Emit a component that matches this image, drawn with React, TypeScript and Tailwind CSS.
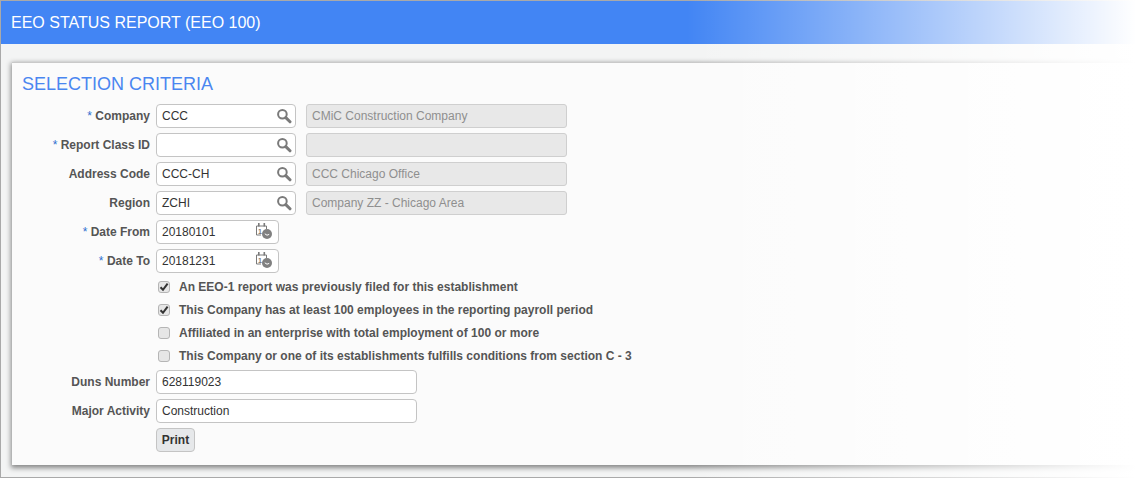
import React from "react";

const Lens = () => (
  <svg width="16" height="16" viewBox="0 0 16 16" fill="none" className="absolute right-[3px] top-[3px]">
    <circle cx="6.4" cy="6.2" r="4.3" stroke="#7a7a7a" strokeWidth="2" fill="#fff" />
    <path d="M9.8 9.6 L14 13.8" stroke="#7a7a7a" strokeWidth="3" strokeLinecap="round" />
  </svg>
);

const Cal = () => (
  <svg width="18" height="18" viewBox="0 0 18 18" fill="none" className="absolute right-[5px] top-[2px]">
    <path d="M1.5 3 H11.5 V6 M1.5 3 V12 H6" stroke="#7a7a7a" strokeWidth="1" />
    <rect x="3" y="0" width="1.6" height="3.5" fill="#7a7a7a" />
    <rect x="8.5" y="0" width="1.6" height="3.5" fill="#7a7a7a" />
    <text x="3" y="10.5" fontSize="7" fontWeight="700" fill="#777" fontFamily="Liberation Sans">1</text>
    <circle cx="12" cy="11" r="5" fill="#808080" />
    <path d="M9.8 10.8 L12 12.2 L14.2 11.4" stroke="#fff" strokeWidth="1" />
  </svg>
);

const Row = ({ label, req, children }: { label: string; req?: boolean; children?: React.ReactNode }) => (
  <div className="flex items-center h-[24px] mb-[5px]">
    <label className="w-[128px] text-right font-bold text-[#555] whitespace-nowrap">
      {req && <span className="text-[#2f6fd0] font-normal">* </span>}
      {label}
    </label>
    <div className="ml-[6px] flex items-center">{children}</div>
  </div>
);

const Input = ({ value, w, icon }: { value: string; w: string; icon?: React.ReactNode }) => (
  <div className={`relative h-[24px] ${w} bg-white border border-[#c4c4c4] rounded-[4px] pl-[5px] flex items-center text-[#333]`}>
    {value}
    {icon}
  </div>
);

const Lookup = ({ value, desc }: { value: string; desc: string }) => (
  <>
    <Input value={value} w="w-[140px]" icon={<Lens />} />
    <div className="ml-[10px] h-[24px] w-[261px] bg-[#e8e8e8] border border-[#cfcfcf] rounded-[3px] pl-[5px] flex items-center text-[#8f8f8f]">
      {desc}
    </div>
  </>
);

const Check = ({ label, on }: { label: string; on?: boolean }) => (
  <div className="flex items-center h-[23px] pl-[136px]">
    <div className="w-[12px] h-[12px] bg-[#e6e6e6] border border-[#b5b5b5] rounded-[3px] flex items-center justify-center">
      {on && (
        <svg width="10" height="10" viewBox="0 0 10 10" fill="none">
          <path d="M1.5 5.2 L4 7.8 L8.6 1.6" stroke="#333" strokeWidth="2" />
        </svg>
      )}
    </div>
    <span className="ml-[9px] font-bold text-[#555] whitespace-nowrap">{label}</span>
  </div>
);

export default function App() {
  return (
    <div className="relative h-[478px] w-[1145px] overflow-hidden">
      <div className="h-full border-t border-l border-b border-[#a9a9a9] bg-[#f3f4f4] text-[12px] font-['Liberation_Sans',Arial,sans-serif]">
        <div className="h-[43px] bg-[#4285f4] flex items-center pl-[10px] text-white text-[16px]">
          EEO STATUS REPORT (EEO 100)
        </div>
        <div className="mt-[18px] ml-[11px] h-[403px] bg-[#fbfbfb] border-t border-[#c9c9c9] pl-[10px] pt-[11px] shadow-[0_2px_5px_1px_rgba(0,0,0,0.45)]">
          <div className="text-[18px] leading-[21px] text-[#4a86f0] mb-[9px]">SELECTION CRITERIA</div>
          <Row label="Company" req><Lookup value="CCC" desc="CMiC Construction Company" /></Row>
          <Row label="Report Class ID" req><Lookup value="" desc="" /></Row>
          <Row label="Address Code"><Lookup value="CCC-CH" desc="CCC Chicago Office" /></Row>
          <Row label="Region"><Lookup value="ZCHI" desc="Company ZZ - Chicago Area" /></Row>
          <Row label="Date From" req><Input value="20180101" w="w-[123px]" icon={<Cal />} /></Row>
          <Row label="Date To" req><Input value="20181231" w="w-[123px]" icon={<Cal />} /></Row>
          <div className="-mt-[3px] mb-[3px]">
            <Check on label="An EEO-1 report was previously filed for this establishment" />
            <Check on label="This Company has at least 100 employees in the reporting payroll period" />
            <Check label="Affiliated in an enterprise with total employment of 100 or more" />
            <Check label="This Company or one of its establishments fulfills conditions from section C - 3" />
          </div>
          <Row label="Duns Number"><Input value="628119023" w="w-[261px]" /></Row>
          <Row label="Major Activity"><Input value="Construction" w="w-[261px]" /></Row>
          <div className="pl-[134px]">
            <button className="h-[24px] w-[39px] bg-[#e6e8ea] border border-[#c4c4c4] rounded-[4px] font-bold text-[#333]">Print</button>
          </div>
        </div>
      </div>
      <div className="absolute inset-y-0 left-[687px] right-0 bg-gradient-to-r from-white/0 to-white to-[98%] pointer-events-none" />
    </div>
  );
}
